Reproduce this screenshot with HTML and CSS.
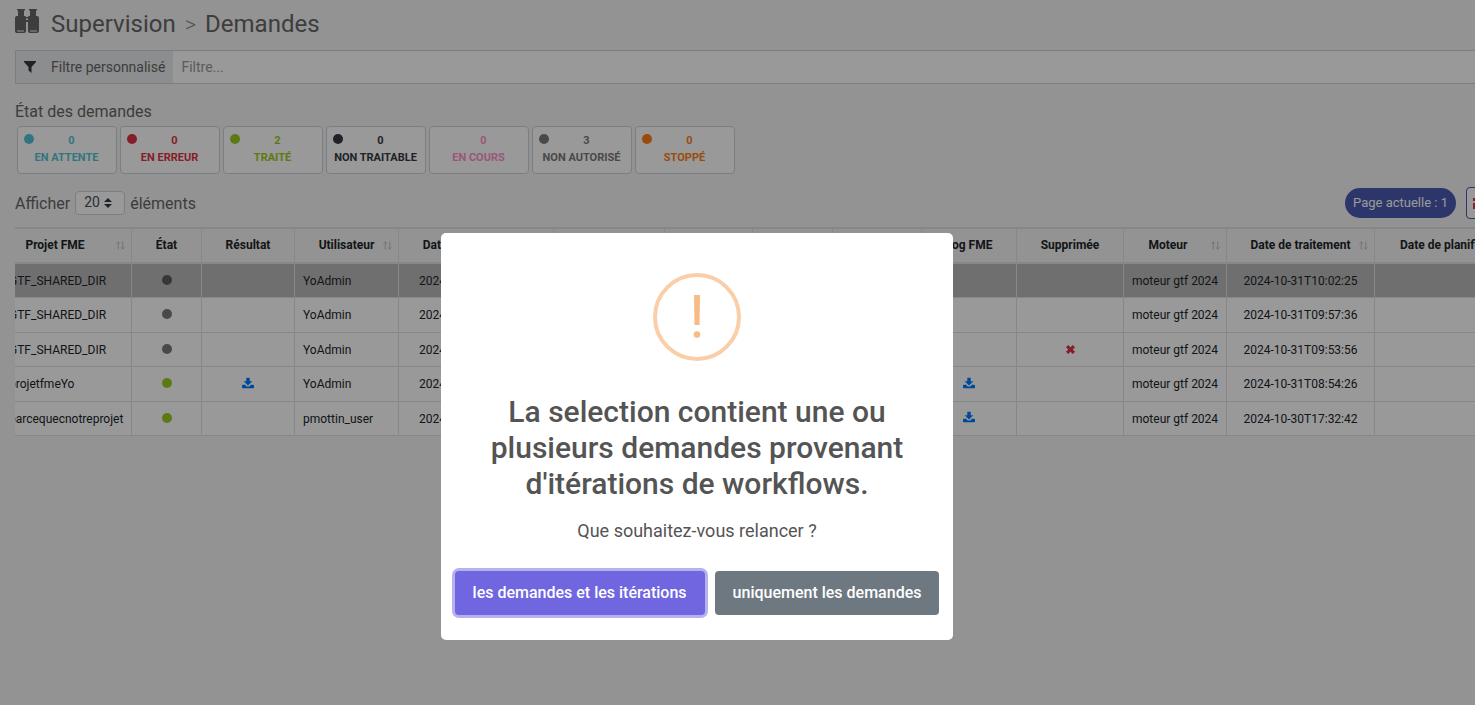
FILE: index.html
```html
<!DOCTYPE html>
<html lang="fr">
<head>
<meta charset="utf-8">
<title>Supervision - Demandes</title>
<link rel="stylesheet" href="styles.css">
</head>
<body>
<svg class="sprite" aria-hidden="true">
  <symbol id="download" viewBox="0 0 14 14"><path d="M5 1h4v4h3L7 10 2 5h3zM1 9h2.500l2 2h3l2-2H13q1 0 1 1v2q0 1-1 1H1q-1 0-1-1v-2q0-1 1-1z"/></symbol>
  <symbol id="sort" viewBox="0 0 10 10"><path d="M2.500 9.500V1M.5 3l2-2 2 2M7.500.5V9M5.500 7l2 2 2-2" fill="none" stroke="currentColor"/></symbol>
</svg>
<main class="page">
  <h1 class="heading">
    <svg class="heading-icon" viewBox="0 0 24 24" aria-hidden="true"><path fill-rule="evenodd" d="M2 0h8v1.500H9V7h1q1 0 1 1h2q0-1 1-1h1V1.500h-1V0h8v1.500h-1V7h1q2 0 2 2v13q0 2-2 2h-7q-2 0-2-2V13h-2v9q0 2-2 2H2q-2 0-2-2V9q0-2 2-2h1V1.500H2zM11 9.500v1.500h2V9.500zM2 21.500v1h7v-1zM15 21.500v1h7v-1z"/></svg>
    <span>Supervision</span><span class="chevron">&gt;</span><span>Demandes</span>
  </h1>
  <div class="filter">
    <label class="filter-label" for="filter">
      <svg class="filter-icon" viewBox="0 0 12 12" aria-hidden="true"><path d="M0 0h12v1L7.500 6v6L4.500 9.500V6L0 1z"/></svg>
      Filtre personnalisé
    </label>
    <input class="filter-input" id="filter" type="text" placeholder="Filtre...">
  </div>
  <h2 class="subtitle">État des demandes</h2>
  <div class="states">
    <button class="state waiting"><span class="dot"></span><span>0</span><span class="state-name">EN ATTENTE</span></button>
    <button class="state error"><span class="dot"></span><span>0</span><span class="state-name">EN ERREUR</span></button>
    <button class="state done"><span class="dot"></span><span>2</span><span class="state-name">TRAITÉ</span></button>
    <button class="state unable"><span class="dot"></span><span>0</span><span class="state-name">NON TRAITABLE</span></button>
    <button class="state running"><span class="dot"></span><span>0</span><span class="state-name">EN COURS</span></button>
    <button class="state denied"><span class="dot"></span><span>3</span><span class="state-name">NON AUTORISÉ</span></button>
    <button class="state stopped"><span class="dot"></span><span>0</span><span class="state-name">STOPPÉ</span></button>
  </div>
  <div class="toolbar">
    <label class="length">Afficher <select class="length-select"><option>20</option></select> éléments</label>
    <span class="current">Page actuelle : 1</span>
    <button class="tool" aria-label="Supprimer"><svg viewBox="0 0 14 14" aria-hidden="true"><path d="M0 2h14v3H0zM0 7h14v6H0z"/></svg></button>
  </div>
  <div class="table-wrap">
    <table class="requests">
      <colgroup><col class="c131"><col class="c70"><col class="c93"><col class="c104"><col class="c155"><col class="c111"><col class="c88"><col class="c80"><col class="c89"><col class="c95"><col class="c107"><col class="c103"><col class="c148"><col class="c162"></colgroup>
      <thead>
        <tr><th class="sortable wide">Projet FME<svg><use href="#sort"/></svg></th><th>État</th><th>Résultat</th><th class="sortable">Utilisateur<svg><use href="#sort"/></svg></th><th>Date de la demande</th><th></th><th></th><th></th><th></th><th>Log FME</th><th>Supprimée</th><th class="sortable medium">Moteur<svg><use href="#sort"/></svg></th><th class="sortable">Date de traitement<svg><use href="#sort"/></svg></th><th class="sortable">Date de planification<svg><use href="#sort"/></svg></th></tr>
      </thead>
      <tbody>
        <tr class="selected"><td>GTF_SHARED_DIR</td><td class="mid denied"><span class="dot"></span></td><td></td><td>YoAdmin</td><td class="mid">2024-10-31T10:02:20</td><td></td><td></td><td></td><td></td><td></td><td></td><td>moteur gtf 2024</td><td class="mid">2024-10-31T10:02:25</td><td></td></tr>
        <tr><td>GTF_SHARED_DIR</td><td class="mid denied"><span class="dot"></span></td><td></td><td>YoAdmin</td><td class="mid">2024-10-31T09:57:30</td><td></td><td></td><td></td><td></td><td></td><td></td><td>moteur gtf 2024</td><td class="mid">2024-10-31T09:57:36</td><td></td></tr>
        <tr><td>GTF_SHARED_DIR</td><td class="mid denied"><span class="dot"></span></td><td></td><td>YoAdmin</td><td class="mid">2024-10-31T09:53:50</td><td></td><td></td><td></td><td></td><td></td><td class="mid"><svg class="cross" viewBox="0 0 10 10" aria-label="Oui"><path d="M2.500 0L5 2.500 7.500 0 10 2.500 7.500 5 10 7.500 7.500 10 5 7.500 2.500 10 0 7.500 2.500 5 0 2.500z"/></svg></td><td>moteur gtf 2024</td><td class="mid">2024-10-31T09:53:56</td><td></td></tr>
        <tr><td>projetfmeYo</td><td class="mid done"><span class="dot"></span></td><td class="mid"><a class="download" href="#resultat" aria-label="Télécharger le résultat"><svg><use href="#download"/></svg></a></td><td>YoAdmin</td><td class="mid">2024-10-31T08:54:20</td><td></td><td></td><td></td><td></td><td class="mid"><a class="download" href="#log" aria-label="Télécharger le log"><svg><use href="#download"/></svg></a></td><td></td><td>moteur gtf 2024</td><td class="mid">2024-10-31T08:54:26</td><td></td></tr>
        <tr><td>parcequecnotreprojet</td><td class="mid done"><span class="dot"></span></td><td></td><td>pmottin_user</td><td class="mid">2024-10-30T17:32:40</td><td></td><td></td><td></td><td></td><td class="mid"><a class="download" href="#log" aria-label="Télécharger le log"><svg><use href="#download"/></svg></a></td><td></td><td>moteur gtf 2024</td><td class="mid">2024-10-30T17:32:42</td><td></td></tr>
      </tbody>
    </table>
  </div>
</main>
<div class="overlay">
  <div class="modal" role="dialog" aria-modal="true" aria-labelledby="modal-title">
    <svg class="warning" viewBox="0 0 88 88" aria-hidden="true"><circle cx="44" cy="44" r="42" fill="none" stroke="#facea8" stroke-width="4"/><path d="M41 22h6l-.5 30h-5z" fill="#f8bb86"/><circle cx="44" cy="61.500" r="3.300" fill="#f8bb86"/></svg>
    <h2 class="modal-title" id="modal-title">La selection contient une ou plusieurs demandes provenant d'itérations de workflows.</h2>
    <p class="modal-text">Que souhaitez-vous relancer ?</p>
    <div class="modal-actions">
      <button class="action primary">les demandes et les itérations</button>
      <button class="action secondary">uniquement les demandes</button>
    </div>
  </div>
</div>
</body>
</html>
```
FILE: styles.css
```css
* { box-sizing: border-box; }
body { margin: 0; min-height: 100vh; overflow: hidden; background: #f5f5f5; color: #666; font-family: Roboto, sans-serif; font-size: 14px; }
button, input, select { font-family: inherit; margin: 0; }
svg { fill: currentColor; }
.sprite { display: none; }
.page { padding: 8px 0 0 15px; }

.heading { display: flex; align-items: center; gap: 9px; height: 32px; margin: 0 0 10px; font-size: 24px; font-weight: 400; }
.heading-icon { width: 24px; height: 24px; margin: 0 3px 6px 0; }
.chevron { color: #888; font-size: 22px; font-weight: 300; }

.filter { display: flex; height: 34px; border: 1px solid #ced4da; border-right: 0; background: #fff; }
.filter-label { display: flex; align-items: center; gap: 15px; padding: 0 8px; background: #e9ecef; }
.filter-icon { width: 12px; height: 12px; color: #343a40; }
.filter-input { flex: 1; border: 0; padding: 0 8px; background: transparent; font-size: 14px; }
.filter-input::placeholder { color: #999; }

.subtitle { margin: 18px 0 5px; font-size: 16px; line-height: 19px; font-weight: 400; }
.states { display: flex; gap: 3px; padding-left: 2px; }
.state { display: grid; grid-template-columns: 10px 1fr; align-content: start; width: 100px; height: 48px; padding: 5px 7px 5px 6px; border: 1px solid #ced4da; border-radius: 4px; background: #fff; font-size: 11px; line-height: 17px; font-weight: 700; text-align: center; }
.state .dot { margin-top: 2px; }
.state-name { grid-column: 1 / 3; white-space: nowrap; }
.dot { display: inline-block; width: 10px; height: 10px; border-radius: 50%; background: currentColor; }
.waiting { color: #54c3d6; }
.error { color: #dc3545; }
.done { color: #9c2; }
.unable { color: #343a40; }
.running { color: #ff8fcb; }
.running .dot { visibility: hidden; }
.denied { color: #7a7a7a; }
.stopped { color: #fd7e14; }

.toolbar { display: flex; align-items: center; gap: 10px; height: 32px; margin: 13px -31px 8px 0; }
.length { display: flex; align-items: center; gap: 5px; margin-right: auto; font-size: 16px; line-height: 24px; padding-top: 1px; }
.length-select { appearance: none; width: 50px; height: 24px; margin-bottom: 1px; padding: 0 8px 2px; border: 1px solid #ced4da; border-radius: 4px; color: #495057; font-size: 14px; background: #fff url("data:image/svg+xml,%3Csvg xmlns='http://www.w3.org/2000/svg' viewBox='0 0 8 10'%3E%3Cpath fill='%23343a40' d='M4 0l4 4H0zM4 10l4-4H0z'/%3E%3C/svg%3E") no-repeat right 12px center / 8px 10px; }
.current { padding: 0 8px; border-radius: 15px; background: #4b5ab1; color: #fff; font-size: 13px; line-height: 30px; }
.tool { display: flex; align-items: center; width: 40px; height: 32px; padding: 0 6px; border: 1px solid #4b5ab1; border-radius: 4px; background: #fff; color: #dc3545; }
.tool svg { width: 14px; height: 14px; }

.table-wrap { overflow: hidden; }
.requests { table-layout: fixed; border-collapse: collapse; width: 1536px; margin-left: -15px; color: #212529; font-size: 12px; }
.c131 { width: 131px; } .c70 { width: 70px; } .c93 { width: 93px; } .c104 { width: 104px; } .c155 { width: 155px; }
.c111 { width: 111px; } .c88 { width: 88px; } .c80 { width: 80px; } .c89 { width: 89px; } .c95 { width: 95px; }
.c107 { width: 107px; } .c103 { width: 103px; } .c148 { width: 148px; } .c162 { width: 162px; }
.requests th, .requests td { border: 1px solid #dee2e6; padding: 0 8px; white-space: nowrap; overflow: hidden; }
.requests th { position: relative; height: 35px; padding-bottom: 2px; border-top-width: 2px; border-bottom-width: 2px; font-weight: 700; }
.requests th svg { position: absolute; right: 6px; top: 12px; width: 9px; height: 9px; color: #bbb; }
.requests .wide { padding-right: 30px; }
.requests .medium { padding-right: 22px; }
.requests td { height: 34px; padding-top: 1px; background: #fff; }
.requests tr:nth-child(2n) td { height: 35px; }
.requests .mid { text-align: center; }
.requests .selected td { background: #b9b9b9; }
.requests td.denied { color: #7a7a7a; }
.requests .selected td.denied { color: #5c5c5c; }
.requests td.done { color: #9c2; }
.download { color: #007bff; }
.download svg { width: 12px; height: 12px; }
.cross { width: 9px; height: 9px; color: #dc3545; }

.overlay { position: fixed; inset: 0; display: flex; align-items: flex-start; justify-content: center; padding: 233px 81px 0 0; background: rgba(0, 0, 0, .4); }
.modal { display: flex; flex-direction: column; align-items: center; width: 512px; padding: 40px 14px 25px; border-radius: 5px; background: #fff; color: #545454; text-align: center; }
.warning { width: 88px; height: 88px; }
.modal-title { max-width: 440px; margin: 33px 0 16px; font-size: 30px; line-height: 36px; font-weight: 500; }
.modal-text { margin: 0 0 28px; font-size: 18px; line-height: 25px; }
.modal-actions { display: flex; gap: 10px; }
.action { height: 44px; padding: 0 18px 2px; border: 0; border-radius: 4px; color: #fff; font-size: 16px; font-weight: 500; white-space: nowrap; }
.primary { background: #7066e0; box-shadow: 0 0 0 3px rgba(112, 102, 224, .5); }
.secondary { background: #6e7881; }
```
